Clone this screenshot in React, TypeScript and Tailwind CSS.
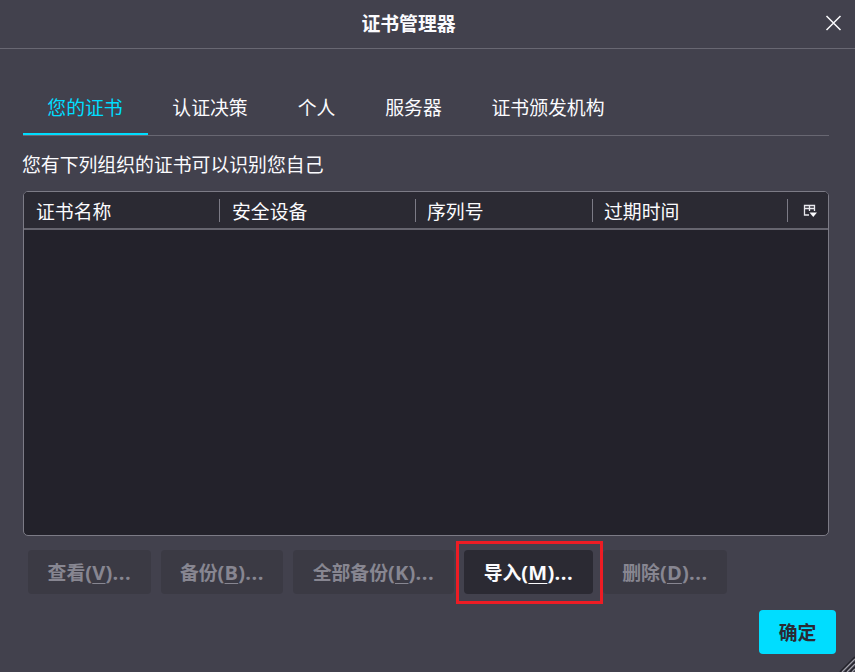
import React from "react";

const tabs = [
  { label: "您的证书", width: "w-[125px]", active: true },
  { label: "认证决策", width: "w-[125px]" },
  { label: "个人", width: "w-[88px]" },
  { label: "服务器", width: "w-[106px]" },
  { label: "证书颁发机构", width: "w-[163px]" },
];

const columns = [
  { label: "证书名称", width: "w-[195px]", pad: "pl-[12px]" },
  { label: "安全设备", width: "w-[196px]", pad: "pl-[13px]" },
  { label: "序列号", width: "w-[177px]", pad: "pl-[12px]" },
  { label: "过期时间", width: "w-[195px]", pad: "pl-[12px]" },
];

const buttons = [
  { label: "查看", mnemonic: "V", width: "w-[123px]", enabled: false },
  { label: "备份", mnemonic: "B", width: "w-[122px]", enabled: false },
  { label: "全部备份", mnemonic: "K", width: "w-[161px]", enabled: false },
  { label: "导入", mnemonic: "M", width: "w-[129px]", enabled: true },
  { label: "删除", mnemonic: "D", width: "w-[124px]", enabled: false },
];

function ActionButton({ label, mnemonic, width, enabled }: (typeof buttons)[number]) {
  return (
    <div className="relative">
      <button
        className={`flex h-11 items-center justify-center whitespace-nowrap rounded-[4px] pt-px font-bold ${width} ${
          enabled ? "bg-[#2b2a33] text-[#fbfbfe]" : "bg-[#3b3a44] text-[#878691]"
        }`}
      >
        <span>
          {label}
          <span className="text-[20px] tracking-[0.2px]">
            (<span className="underline decoration-1 underline-offset-[3px]">{mnemonic}</span>)
            <span className="tracking-[0.6px]">...</span>
          </span>
        </span>
      </button>
      {enabled && (
        <div className="pointer-events-none absolute -left-2 -top-[9px] h-[63px] w-[147px] border-[3px] border-[#ed1c24]" />
      )}
    </div>
  );
}

export default function App() {
  return (
    <div className="relative flex h-[672px] w-[855px] flex-col overflow-hidden bg-[#42414d] font-['Open_Sans','Noto_Sans_CJK_SC',sans-serif] text-[18.85px] leading-[26px] text-[#fbfbfe]">
      <header className="flex h-[49px] shrink-0 items-center border-b border-[#686772] pb-px">
        <h1 className="ml-[46px] flex-1 pr-[54px] text-center font-bold">证书管理器</h1>
        <button aria-label="关闭" className="mr-[13px] flex h-[17px] w-[17px] items-center justify-center">
          <svg width="17" height="17" viewBox="0 0 17 17" fill="none" stroke="#fbfbfe" strokeWidth="1.5">
            <path d="M1.5 1l14 14M15.5 1l-14 14" />
          </svg>
        </button>
      </header>

      <main className="pl-[23px] pr-[26px]">
        <nav className="mt-[33px] flex h-[54px] border-b border-[#686772]">
          {tabs.map((tab) => (
            <div
              key={tab.label}
              className={`flex h-[53px] items-center justify-center border-b-2 pr-px pt-px ${tab.width} ${
                tab.active ? "border-[#00ddff] text-[#00ddff]" : "border-transparent"
              }`}
            >
              {tab.label}
            </div>
          ))}
        </nav>

        <p className="-ml-px mt-4">您有下列组织的证书可以识别您自己</p>

        <section className="mt-[13px] h-[345px] overflow-hidden rounded-[5px] border border-[#7c7b86] bg-[#23222b]">
          <div className="flex h-[38px] border-b-2 border-[#66656f] bg-[#2b2a33]">
            {columns.map((column) => (
              <div key={column.label} className={`flex h-[37px] items-start pt-[7px] ${column.width}`}>
                <span className={`flex-1 ${column.pad}`}>{column.label}</span>
                <span className="-mr-px h-[23px] w-px bg-[#7c7b86]" />
              </div>
            ))}
            <div className="flex flex-1 items-center justify-center pl-[4px] pt-[2px]">
              <svg width="14" height="14" viewBox="0 0 14 14" fill="none" stroke="#e8e8ed">
                <path d="M6 11H1.5V1.5h10V7M1 4.5h11M6.5 1.5V7" strokeWidth="1.3" />
                <path d="M6.5 8.5h7.5L10.25 13z" fill="#fbfbfe" stroke="none" />
              </svg>
            </div>
          </div>
        </section>

        <div className="mt-[14px] flex gap-[10px] pl-[5px]">
          {buttons.map((button) => (
            <ActionButton key={button.mnemonic} {...button} />
          ))}
        </div>
      </main>

      <footer className="mt-4 flex justify-end pr-[19px]">
        <button className="h-11 w-[77px] rounded-[4px] bg-[#00ddff] pt-px font-bold text-[#2b2a33]">确定</button>
      </footer>

      <svg className="absolute bottom-0 right-0" width="16" height="16" viewBox="0 0 16 16" fill="none">
        <path d="M1 16L16 1M6 16L16 6M11 16l5-5" stroke="#24232b" strokeWidth="1.7" />
        <path d="M3 16L16 3M8 16l8-8M13 16l3-3" stroke="#a2a1aa" strokeWidth="1.2" />
      </svg>
    </div>
  );
}
